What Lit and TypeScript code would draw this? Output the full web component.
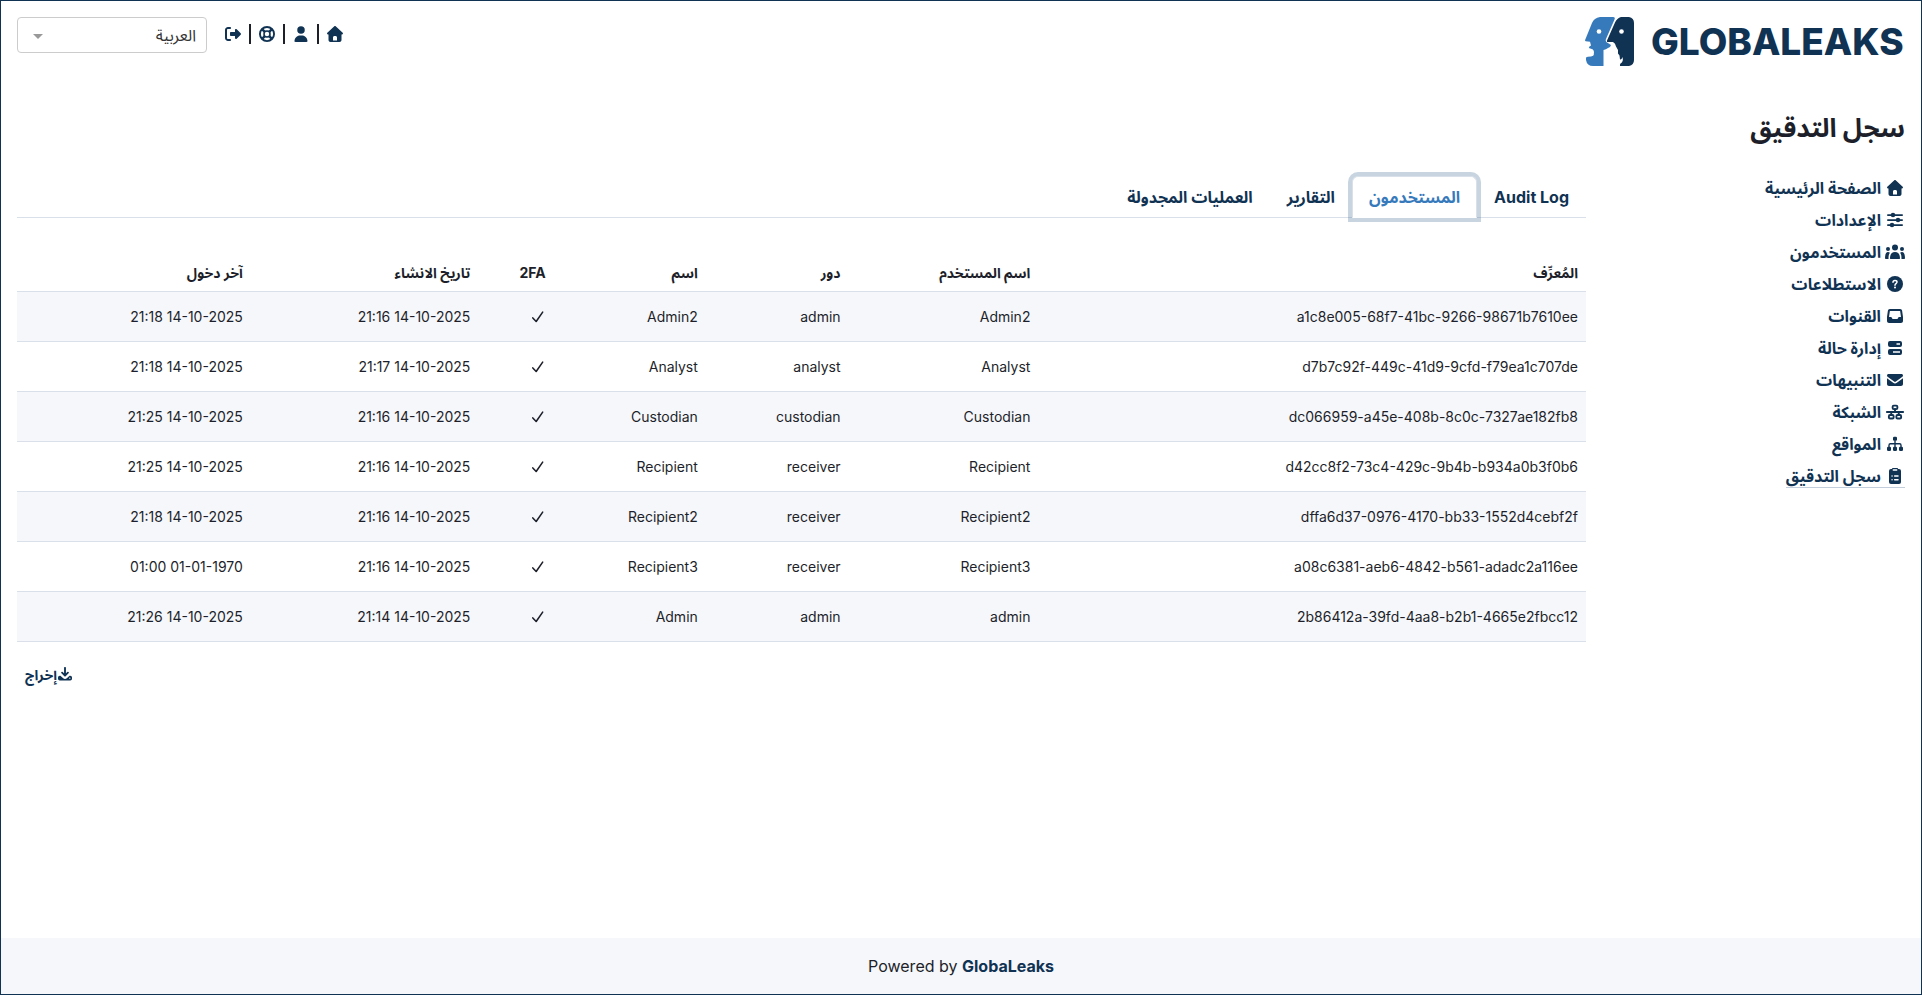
import { LitElement, html, css, svg } from "lit";
import { customElement, state } from "lit/decorators.js";

type Icon = { w: number; h: number; body: unknown };

const icons: Record<string, Icon> = {
  house: { w: 512, h: 512, body: svg`<path fill-rule="evenodd" d="M277.8 8.6c-12.3-11.4-31.3-11.4-43.5 0l-224 208c-9.6 9-12.8 22.9-8 35.1S18.8 272 32 272l16 0 0 176c0 35.3 28.7 64 64 64l288 0c35.3 0 64-28.7 64-64l0-176 16 0c13.2 0 25-8.1 29.8-20.3s1.6-26.2-8-35.1l-224-208zM240 320l32 0c26.5 0 48 21.5 48 48l0 96-128 0 0-96c0-26.5 21.5-48 48-48z"/>` },
  user: { w: 448, h: 512, body: svg`<path d="M224 248a120 120 0 1 0 0-240 120 120 0 1 0 0 240zm-29.700 56C95.800 304 16 383.800 16 482.300 16 498.700 29.300 512 45.700 512l356.600 0c16.400 0 29.700-13.300 29.700-29.700 0-98.500-79.800-178.300-178.300-178.300l-59.400 0z"/>` },
  ring: { w: 512, h: 512, body: svg`<g fill="none" stroke="currentColor"><circle cx="256" cy="256" r="226" stroke-width="60"/><circle cx="256" cy="256" r="96" stroke-width="50"/><path stroke-width="80" d="M105 105l82 82M407 105l-82 82M105 407l82-82M407 407l-82-82"/></g>` },
  exit: { w: 512, h: 512, body: svg`<path d="M160 96c17.700 0 32-14.300 32-32s-14.300-32-32-32H96C43 32 0 75 0 128v256c0 53 43 96 96 96h64c17.700 0 32-14.300 32-32s-14.300-32-32-32H96c-17.700 0-32-14.300-32-32V128c0-17.700 14.300-32 32-32h64zM502.600 278.600c12.500-12.500 12.500-32.800 0-45.300l-128-128c-9.200-9.200-22.900-11.900-34.900-6.900S320 115.100 320 128v64H192c-17.700 0-32 14.300-32 32v64c0 17.700 14.300 32 32 32h128v64c0 12.900 7.800 24.600 19.800 29.600s25.700 2.200 34.900-6.900l128-128z"/>` },
  sliders: { w: 512, h: 512, body: svg`<g fill="none" stroke="currentColor" stroke-width="56" stroke-linecap="round"><path d="M28 96h456M28 256h456M28 416h456"/></g><circle cx="192" cy="96" r="72"/><circle cx="352" cy="256" r="72"/><circle cx="160" cy="416" r="72"/>` },
  users: { w: 640, h: 512, body: svg`<circle cx="320" cy="112" r="96"/><circle cx="96" cy="160" r="64"/><circle cx="544" cy="160" r="64"/><path d="M160 464c0-124 50-208 160-208s160 84 160 208c0 9-7 16-16 16H176c-9 0-16-7-16-16zM0 456c0-114 32-200 96-200 26 0 44 8 60 22-34 46-44 100-44 186 0 6 1 11 3 16H24c-13 0-24-11-24-24zM640 456c0-114-32-200-96-200-26 0-44 8-60 22 34 46 44 100 44 186 0 6-1 11-3 16h91c13 0 24-11 24-24z"/>` },
  question: { w: 512, h: 512, body: svg`<path d="M256 512a256 256 0 1 0 0-512 256 256 0 1 0 0 512z"/><path fill="none" stroke="#fff" stroke-width="48" stroke-linecap="round" d="M192 196c0-34 24-56 64-56s64 22 64 54c0 50-64 48-64 98"/><circle cx="256" cy="368" r="32" fill="#fff"/>` },
  inbox: { w: 512, h: 512, body: svg`<path fill-rule="evenodd" d="M91.800 32C59.900 32 33 55.400 28.400 86.900L.6 281c-.4 3-.6 6-.6 9V416c0 35.300 28.700 64 64 64h384c35.300 0 64-28.700 64-64V290c0-3-.2-6-.7-9L483.600 86.900C479.100 55.400 452.100 32 420.200 32H91.800zm0 64h328.400l27.500 192H387.800c-12.100 0-23.200 6.800-28.600 17.700l-14.300 28.600c-5.400 10.800-16.500 17.700-28.600 17.700H195.800c-12.100 0-23.200-6.800-28.600-17.700l-14.300-28.600c-5.400-10.800-16.500-17.700-28.600-17.700H64.400L91.800 96z"/>` },
  server: { w: 448, h: 512, body: svg`<path fill-rule="evenodd" d="M64 32h320a64 64 0 0 1 64 64v64a64 64 0 0 1-64 64H64a64 64 0 0 1-64-64V96a64 64 0 0 1 64-64zM272 104v48h112v-48zM64 288h320a64 64 0 0 1 64 64v64a64 64 0 0 1-64 64H64a64 64 0 0 1-64-64v-64a64 64 0 0 1 64-64zM160 360v48h224v-48z"/>` },
  envelope: { w: 512, h: 512, body: svg`<path d="M48 64C21.500 64 0 85.500 0 112c0 15.100 7.100 29.300 19.200 38.400l208 156c17.100 12.800 40.500 12.800 57.600 0l208-156C504.900 141.300 512 127.100 512 112c0-26.500-21.500-48-48-48H48zM0 196v188c0 35.300 28.700 64 64 64h384c35.300 0 64-28.700 64-64V196L313.600 344.800c-34.100 25.600-81.100 25.600-115.200 0L0 196z"/>` },
  network: { w: 576, h: 512, body: svg`<g fill="none" stroke="currentColor" stroke-width="60"><rect x="212" y="52" width="152" height="112" rx="36"/><rect x="92" y="352" width="152" height="112" rx="36"/><rect x="332" y="352" width="152" height="112" rx="36"/><path stroke-linecap="round" d="M28 256h520M288 160v96M168 256v96M408 256v96"/></g>` },
  sitemap: { w: 512, h: 512, body: svg`<rect x="192" y="24" width="128" height="128" rx="40"/><rect x="0" y="344" width="128" height="136" rx="40"/><rect x="192" y="344" width="128" height="136" rx="40"/><rect x="384" y="344" width="128" height="136" rx="40"/><path fill="none" stroke="currentColor" stroke-width="44" d="M256 140v210M64 350v-58q0-44 44-44h296q44 0 44 44v58"/>` },
  clipboard: { w: 384, h: 512, body: svg`<path d="M64 32h256a64 64 0 0 1 64 64v352a64 64 0 0 1-64 64H64a64 64 0 0 1-64-64V96a64 64 0 0 1 64-64z"/><rect x="88" y="0" width="208" height="120" rx="44"/><path stroke="#fff" stroke-width="42" stroke-linecap="round" d="M136 64h112M96 256h4M180 256h110M96 376h4M180 376h110"/>` },
  download: { w: 512, h: 512, body: svg`<path fill="none" stroke="currentColor" stroke-width="68" stroke-linecap="round" stroke-linejoin="round" d="M256 32v270M150 208l106 106 106-106"/><path fill-rule="evenodd" d="M64 320h24l92 84a110 110 0 0 0 152 0l92-84h24a64 64 0 0 1 64 64v48a64 64 0 0 1-64 64H64a64 64 0 0 1-64-64v-48a64 64 0 0 1 64-64zM432 384a24 24 0 1 0 0 48 24 24 0 0 0 0-48z"/>` },
  check: { w: 512, h: 512, body: svg`<path fill="none" stroke="currentColor" stroke-width="62" stroke-linecap="round" stroke-linejoin="round" d="M52 312l132 138L440 84"/>` },
};

const icon = (name: string, cls = "icon") => {
  const i = icons[name];
  return html`<svg class=${cls} viewBox="0 0 ${i.w} ${i.h}" fill="currentColor" aria-hidden="true">${i.body}</svg>`;
};

const menu: [string, string][] = [
  ["house", "الصفحة الرئيسية"],
  ["sliders", "الإعدادات"],
  ["users", "المستخدمون"],
  ["question", "الاستطلاعات"],
  ["inbox", "القنوات"],
  ["server", "إدارة حالة"],
  ["envelope", "التنبيهات"],
  ["network", "الشبكة"],
  ["sitemap", "المواقع"],
  ["clipboard", "سجل التدقيق"],
];

const tabs = ["Audit Log", "المستخدمون", "التقارير", "العمليات المجدولة"];

const headings: [string, string][] = [
  ["المُعرِّف", "c-id"],
  ["اسم المستخدم", "c-username"],
  ["دور", "c-role"],
  ["اسم", "c-name"],
  ["2FA", "c-mfa"],
  ["تاريخ الانشاء", "c-created"],
  ["آخر دخول", "c-login"],
];

const users = [
  ["a1c8e005-68f7-41bc-9266-98671b7610ee", "Admin2", "admin", "Admin2", "14-10-2025 21:16", "14-10-2025 21:18"],
  ["d7b7c92f-449c-41d9-9cfd-f79ea1c707de", "Analyst", "analyst", "Analyst", "14-10-2025 21:17", "14-10-2025 21:18"],
  ["dc066959-a45e-408b-8c0c-7327ae182fb8", "Custodian", "custodian", "Custodian", "14-10-2025 21:16", "14-10-2025 21:25"],
  ["d42cc8f2-73c4-429c-9b4b-b934a0b3f0b6", "Recipient", "receiver", "Recipient", "14-10-2025 21:16", "14-10-2025 21:25"],
  ["dffa6d37-0976-4170-bb33-1552d4cebf2f", "Recipient2", "receiver", "Recipient2", "14-10-2025 21:16", "14-10-2025 21:18"],
  ["a08c6381-aeb6-4842-b561-adadc2a116ee", "Recipient3", "receiver", "Recipient3", "14-10-2025 21:16", "01-01-1970 01:00"],
  ["2b86412a-39fd-4aa8-b2b1-4665e2fbcc12", "admin", "admin", "Admin", "14-10-2025 21:14", "14-10-2025 21:26"],
];

@customElement("app-root")
export class AppRoot extends LitElement {
  @state() private tab = 1;

  static styles = css`
    :host {
      --navy: #103253;
      --blue: #377abc;
      --line: #dae0e9;
      --soft: #f5f7fb;
      display: flex;
      flex-direction: column;
      min-height: 100vh;
      box-sizing: border-box;
      border: 1px solid var(--navy);
      background: #fff;
      color: #1d1f2a;
      font: 16px/24px Inter, "Noto Sans", "Noto Sans Arabic", sans-serif;
    }
    * { box-sizing: border-box; }
    a { color: var(--navy); text-decoration: none; font-weight: 700; }
    .icon { width: 20px; height: 16px; flex: none; overflow: visible; }
    header {
      display: flex;
      justify-content: space-between;
      align-items: flex-start;
      padding: 16px;
    }
    .logo { display: flex; align-items: center; gap: 16px; width: 320px; direction: ltr; }
    .faces { width: 50px; height: 50px; flex: none; }
    .brand { font-size: 37px; line-height: 50px; font-weight: 800; }
    .tools { display: flex; gap: 16px; }
    .quick { display: flex; align-items: center; gap: 6px; height: 34px; }
    .quick a { display: flex; }
    .bar { width: 2px; height: 20px; background: #1d1f2a; }
    .language { position: relative; width: 190px; }
    .language select {
      appearance: none;
      width: 100%;
      height: 36px;
      padding: 0 10px;
      border: 1px solid #ccc;
      border-radius: 4px;
      background: #fff;
      color: #333;
      font: inherit;
    }
    .language::after {
      content: "";
      position: absolute;
      inset-inline-end: 16px;
      top: 17px;
      border: 5px solid transparent;
      border-top-color: #999;
      border-bottom: 0;
      pointer-events: none;
    }
    h1 { margin: 0; padding: 24px 16px 11px; font-size: 26px; line-height: 42px; font-weight: 700; }
    .page { display: flex; flex: 1; padding: 16px; }
    .side { flex: none; width: 319px; }
    .side ul { list-style: none; margin: 0; padding: 0; display: flex; flex-direction: column; gap: 8px; }
    .side li { display: flex; }
    .side a { display: flex; align-items: center; gap: 4px; height: 24px; border-bottom: 1px solid transparent; }
    .side a.current { border-color: #c3cedd; }
    main { flex: 1; min-width: 0; }
    .tabs { display: flex; border-bottom: 1px solid var(--line); }
    .tabs button {
      padding: 8px 16px;
      margin-bottom: -1px;
      border: 1px solid transparent;
      border-radius: 6px 6px 0 0;
      background: none;
      color: var(--navy);
      font: inherit;
      font-weight: 700;
      cursor: pointer;
    }
    .tabs .active {
      color: var(--blue);
      background: #fff;
      border-color: var(--line) var(--line) #fff;
      box-shadow: 0 0 0 4px rgba(35, 87, 131, 0.25);
    }
    table {
      width: 100%;
      margin-top: 36px;
      border-collapse: collapse;
      table-layout: fixed;
      font-size: 14px;
      line-height: 21px;
    }
    th, td { padding: 0 8px; text-align: start; border-bottom: 1px solid var(--line); }
    th { height: 37px; font-weight: 700; }
    td { height: 50px; }
    tbody tr:nth-child(odd) { background: var(--soft); }
    .c-id { width: 34.9%; }
    .c-username { width: 12.1%; }
    .c-role { width: 9.1%; }
    .c-name { width: 9.7%; }
    .c-mfa { width: 4.8%; }
    .c-created { width: 14.5%; }
    .check { display: block; width: 16px; height: 13px; }
    .actions { display: flex; justify-content: flex-end; padding-top: 17px; }
    .export {
      display: flex;
      align-items: center;
      gap: 1px;
      padding: 5px 8px;
      border: 0;
      background: none;
      color: var(--navy);
      font: inherit;
      font-size: 14px;
      line-height: 21px;
      font-weight: 700;
    }
    .small { width: 14px; height: 14px; }
    footer { padding: 16px; background: var(--soft); text-align: center; direction: ltr; }
  `;

  render() {
    return html`
      <header dir="rtl">
        <a class="logo" href="#">
          <svg class="faces" viewBox="0 0 50 50" aria-hidden="true">
            <path fill="#377abc" d="M15 0H28Q30.500 0 29.500 2.500L21 22Q20 25 22.500 25.800L26 28Q25.500 30.500 23 31Q21 32.500 18.500 33V49H8Q2 49 1 43V40.500Q2 39.500 6 39.500Q9.500 39 8.800 36.500Q9.500 33.500 7.500 32.300L3.800 31Q4 29 6 28.500L5 24.700L.6 24.200Q-.4 23.700 .3 22.500L7 6Q9 1 15 0Z"/>
            <path fill="#103253" d="M36 0H44Q49 1 49 6V43Q49 48 44 49H35Q34.500 46.500 37 45.500Q38.500 43 37.500 40Q36.500 43 35 42.500L34.500 38.500L33 36.500V33L31 29.500Q30.500 26 28 25H22.300Q21.400 24.500 22 23.500L30 5.500Q32 1 36 0Z"/>
            <circle cx="14" cy="14.500" r="2.300" fill="#fff"/><circle cx="36.500" cy="14.500" r="2.300" fill="#fff"/>
          </svg>
          <span class="brand">GLOBALEAKS</span>
        </a>
        <div class="tools">
          <nav class="quick">
            <a href="#" aria-label="house">${icon("house")}</a><span class="bar"></span>
            <a href="#" aria-label="user">${icon("user")}</a><span class="bar"></span>
            <a href="#" aria-label="help">${icon("ring")}</a><span class="bar"></span>
            <a href="#" aria-label="exit">${icon("exit")}</a>
          </nav>
          <div class="language"><select aria-label="اللغة"><option>العربية</option></select></div>
        </div>
      </header>
      <h1 dir="rtl">سجل التدقيق</h1>
      <div class="page" dir="rtl">
        <nav class="side">
          <ul>
            ${menu.map(([name, label], i) => html`
              <li><a href="#" class=${i === 9 ? "current" : ""}>${icon(name)}<span>${label}</span></a></li>`)}
          </ul>
        </nav>
        <main>
          <div class="tabs" role="tablist">
            ${tabs.map((label, i) => html`
              <button role="tab" aria-selected=${i === this.tab} class=${i === this.tab ? "active" : ""}
                @click=${() => (this.tab = i)}>${label}</button>`)}
          </div>
          <table>
            <thead><tr>${headings.map(([label, cls]) => html`<th class=${cls}>${label}</th>`)}</tr></thead>
            <tbody>
              ${users.map(([id, username, role, name, created, login]) => html`
                <tr>
                  <td>${id}</td><td>${username}</td><td>${role}</td><td>${name}</td>
                  <td>${icon("check", "check")}</td><td>${created}</td><td>${login}</td>
                </tr>`)}
            </tbody>
          </table>
          <div class="actions">
            <button class="export">${icon("download", "small")}<span>إخراج</span></button>
          </div>
        </main>
      </div>
      <footer>Powered by <a href="#">GlobaLeaks</a></footer>
    `;
  }
}
